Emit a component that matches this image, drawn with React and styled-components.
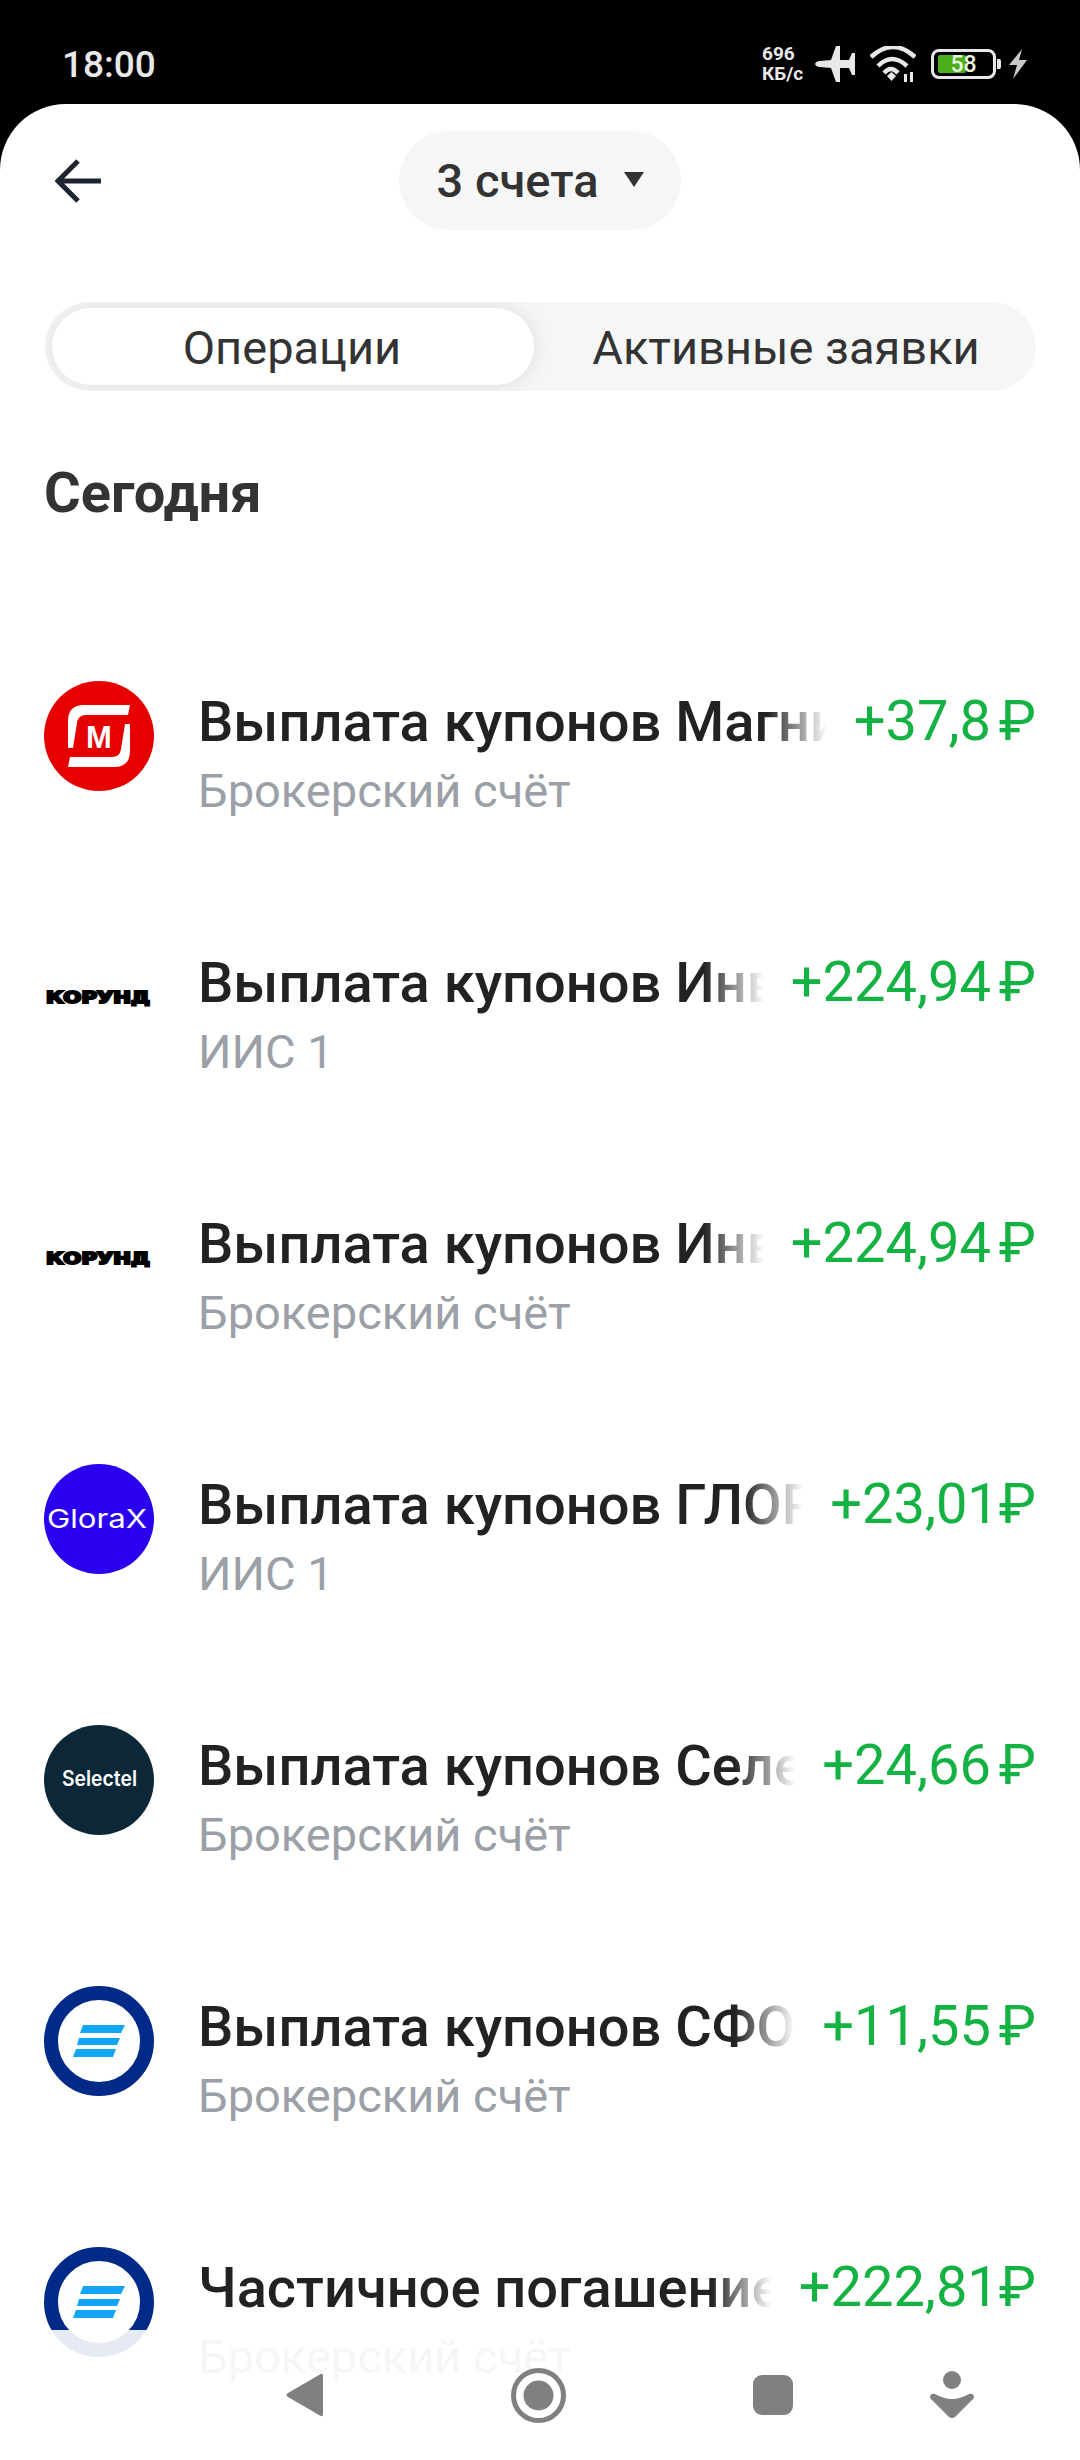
import styled, { createGlobalStyle } from "styled-components";

const GlobalStyle = createGlobalStyle`
    html, body {
        margin: 0;
        padding: 0;
        background: #000;
        font-family: Roboto, "Noto Sans", sans-serif;
    }
`;

const Screen = styled.div`
    position: relative;
    width: 1080px;
    height: 2460px;
    overflow: hidden;
    background: #000;
    display: flex;
    flex-direction: column;
`;

/* status bar */
const StatusBar = styled.div`
    height: 104px;
    flex: none;
    box-sizing: border-box;
    padding: 0 53px 0 62px;
    display: flex;
    align-items: center;
    color: #e8e8e8;
`;

const Clock = styled.div`
    font-size: 37px;
    font-weight: 500;
    line-height: 40px;
    margin-top: 26px;
    flex: 1;
`;

const StatusIcons = styled.div`
    display: flex;
    align-items: center;
    margin-top: 24px;
`;

const NetSpeed = styled.div`
    font-size: 19px;
    font-weight: 700;
    line-height: 20px;
    width: 53px;
`;

const StatusIcon = styled.svg`
    display: block;
    flex: none;
    margin-right: ${(p) => p.$gap || 0}px;
`;

const Battery = styled.div`
    position: relative;
    box-sizing: border-box;
    width: 65px;
    height: 30px;
    border: 3px solid #e8e8e8;
    border-radius: 8px;
    margin-right: 1px;
    display: flex;
    align-items: center;
    justify-content: center;
    font-size: 23px;
    font-weight: 500;
    color: #e8f5dc;
    &::before {
        content: "";
        position: absolute;
        left: 4px;
        top: 3px;
        bottom: 3px;
        width: 28px;
        background: #4caf1a;
        border-radius: 2px;
    }
    span {
        position: relative;
    }
`;

const BatteryNub = styled.div`
    width: 4px;
    height: 10px;
    background: #e8e8e8;
    border-radius: 0 2px 2px 0;
    margin-right: 8px;
`;

/* white sheet */
const Sheet = styled.div`
    flex: 1;
    background: #fff;
    border-radius: 66px 66px 0 0;
    min-height: 0;
    overflow: hidden;
`;

const Header = styled.div`
    height: 99px;
    margin-top: 27px;
    position: relative;
    display: flex;
    justify-content: center;
`;

const BackButton = styled.svg`
    position: absolute;
    left: 55px;
    top: 28px;
`;

const AccountPill = styled.div`
    width: 282px;
    box-sizing: border-box;
    background: #f5f7f6;
    border-radius: 50px;
    display: flex;
    align-items: center;
    justify-content: center;
    gap: 25px;
    font-size: 47px;
    font-weight: 500;
    color: #333;
`;

const Caret = styled.div`
    width: 0;
    height: 0;
    border-left: 10.5px solid transparent;
    border-right: 10.5px solid transparent;
    border-top: 15px solid #333;
    margin-top: -2px;
`;

const Tabs = styled.div`
    height: 89px;
    margin: 72px 44px 0 45px;
    background: #f5f7f6;
    border-radius: 45px;
    overflow: hidden;
    display: flex;
    align-items: stretch;
    padding: 6px 0 6px 7px;
    box-sizing: border-box;
`;

const Tab = styled.div`
    width: ${(p) => (p.$active ? "482px" : "auto")};
    flex: ${(p) => (p.$active ? "none" : "1")};
    display: flex;
    align-items: center;
    justify-content: center;
    font-size: 47px;
    padding: ${(p) => (p.$active ? "2px 2px 0 0" : "2px 0 0 2px")};
    box-sizing: border-box;
    color: #333;
    border-radius: 40px;
    background: ${(p) => (p.$active ? "#fff" : "transparent")};
    box-shadow: ${(p) => (p.$active ? "0 0 22px rgba(0, 0, 0, 0.1)" : "none")};
`;

const DayTitle = styled.div`
    font-size: 56px;
    font-weight: 700;
    line-height: 64px;
    color: #333;
    margin: 70px 44px 0;
`;

const List = styled.div`
    margin-top: 156px;
`;

const Row = styled.div`
    height: 261px;
    box-sizing: border-box;
    padding: 0 44px;
    display: flex;
    align-items: flex-start;
`;

const Logo = styled.svg`
    display: block;
    flex: none;
    width: 110px;
    height: 110px;
    margin-right: 44px;
`;

const RowText = styled.div`
    flex: 1;
    min-width: 0;
    margin-top: 9px;
`;

const RowTitle = styled.div`
    font-size: 56px;
    font-weight: 500;
    line-height: 64px;
    color: #222;
    white-space: nowrap;
    overflow: hidden;
    -webkit-mask-image: linear-gradient(to left, transparent 0, #000 60px);
    mask-image: linear-gradient(to left, transparent 0, #000 60px);
`;

const RowSubtitle = styled.div`
    font-size: 47px;
    line-height: 52px;
    margin-top: 11px;
    color: #9ba0a6;
`;

const Amount = styled.div`
    flex: none;
    margin: 8px 0 0 27px;
    font-size: 56px;
    word-spacing: -6px;
    line-height: 64px;
    color: #14b143;
    white-space: nowrap;
`;

/* translucent navigation bar over the list */
const NavBar = styled.div`
    position: absolute;
    left: 0;
    right: 0;
    bottom: 0;
    height: 130px;
    box-sizing: border-box;
    background: rgba(255, 255, 255, 0.9);
    padding: 38px 0 0 286px;
    display: flex;
    align-items: flex-start;
    gap: 187px;
`;

const NavIcon = styled.svg`
    display: block;
    flex: none;
    margin-left: ${(p) => p.$shift || 0}px;
    margin-top: ${(p) => p.$top || 0}px;
`;

const MagnitLogo = () => (
    <Logo viewBox="0 0 110 110">
        <circle cx="55" cy="55" r="55" fill="#e60000" />
        <path
            d="M86 24 L84 34 H42 Q34 34 33 42 L29 67 H24 V40 Q24 24 40 24 Z"
            fill="#fff"
        />
        <path
            d="M24 86 L26 76 H68 Q76 76 77 68 L81 43 H86 V70 Q86 86 70 86 Z"
            fill="#fff"
        />
        <text
            x="55"
            y="67"
            textAnchor="middle"
            fontFamily="Liberation Sans, sans-serif"
            fontWeight="700"
            fontSize="31"
            fill="#fff"
        >
            М
        </text>
    </Logo>
);

const KorundLogo = () => (
    <Logo viewBox="0 0 110 110">
        <text
            x="2"
            y="60.5"
            textLength="104"
            lengthAdjust="spacingAndGlyphs"
            fontFamily="DejaVu Sans, sans-serif"
            fontWeight="700"
            fontSize="15"
            stroke="#000"
            strokeWidth="2"
            fill="#000"
        >
            КОРУНД
        </text>
    </Logo>
);

const GloraxLogo = () => (
    <Logo viewBox="0 0 110 110">
        <circle cx="55" cy="55" r="55" fill="#2a00ee" />
        <text
            x="3"
            y="64"
            textLength="100"
            lengthAdjust="spacingAndGlyphs"
            fontFamily="Inter, sans-serif"
            fontWeight="400"
            fontSize="26"
            fill="#fff"
        >
            GloraX
        </text>
    </Logo>
);

const SelectelLogo = () => (
    <Logo viewBox="0 0 110 110">
        <circle cx="55" cy="55" r="55" fill="#0b2738" />
        <text
            x="18"
            y="61"
            textLength="75"
            lengthAdjust="spacingAndGlyphs"
            fontFamily="Inter, sans-serif"
            fontWeight="600"
            fontSize="21"
            fill="#fff"
        >
            Selectel
        </text>
    </Logo>
);

const SfoLogo = () => (
    <Logo viewBox="0 0 110 110">
        <circle cx="55" cy="55" r="48" fill="#fff" stroke="#002a87" strokeWidth="14" />
        <polygon points="39,39 81,39 77,47 36,47" fill="#12a5f5" />
        <polygon points="35,52 76,52 73,59 33,59" fill="#12a5f5" />
        <polygon points="32,63 72,63 69,71 29,71" fill="#12a5f5" />
    </Logo>
);

const operations = [
    { logo: MagnitLogo, title: "Выплата купонов Магнит", account: "Брокерский счёт", amount: "+37,8 ₽" },
    { logo: KorundLogo, title: "Выплата купонов Инвест", account: "ИИС 1", amount: "+224,94 ₽" },
    { logo: KorundLogo, title: "Выплата купонов Инвест", account: "Брокерский счёт", amount: "+224,94 ₽" },
    { logo: GloraxLogo, title: "Выплата купонов ГЛОРАКС", account: "ИИС 1", amount: "+23,01₽" },
    { logo: SelectelLogo, title: "Выплата купонов Селектел", account: "Брокерский счёт", amount: "+24,66 ₽" },
    { logo: SfoLogo, title: "Выплата купонов СФО Ипотека", account: "Брокерский счёт", amount: "+11,55 ₽" },
    { logo: SfoLogo, title: "Частичное погашение облигаций", account: "Брокерский счёт", amount: "+222,81₽" },
];

function App() {
    return (
        <Screen>
            <GlobalStyle />
            <StatusBar>
                <Clock>18:00</Clock>
                <StatusIcons>
                    <NetSpeed>
                        696
                        <br />
                        КБ/с
                    </NetSpeed>
                    <StatusIcon width="40" height="36" viewBox="0 0 40 36" $gap={15}>
                        <path
                            d="M0 18 Q1 15 5 15 L16 14 L21 0 H25 L25 14 L34 14 L37 7 H40 V29 H37 L34 22 L25 22 L25 36 H21 L16 22 L5 21 Q1 21 0 18 Z"
                            fill="#e8e8e8"
                        />
                    </StatusIcon>
                    <StatusIcon width="46" height="36" viewBox="0 0 46 36" $gap={15}>
                        <g fill="none" stroke="#e8e8e8" strokeWidth="4.5">
                            <path d="M1 11 Q23 -9 45 11" />
                            <path d="M8 20 Q22 6 37 20" />
                            <path d="M14 27 Q21 19 28 27" />
                        </g>
                        <path d="M17 30 L21.5 26 L26 30 L21.5 35 Z" fill="#e8e8e8" />
                        <rect x="34" y="28" width="3" height="8" fill="#e8e8e8" />
                        <rect x="40" y="26" width="3" height="10" fill="#e8e8e8" />
                    </StatusIcon>
                    <Battery>
                        <span>58</span>
                    </Battery>
                    <BatteryNub />
                    <StatusIcon width="18" height="30" viewBox="0 0 18 30">
                        <path d="M13 0 L0 16 H8 L4 30 L18 11 H10 Z" fill="#c8c8c8" />
                    </StatusIcon>
                </StatusIcons>
            </StatusBar>
            <Sheet>
                <Header>
                    <BackButton width="46" height="44" viewBox="0 0 46 44">
                        <path
                            d="M23 2 L3 22 L23 42 M3 22 H46"
                            fill="none"
                            stroke="#1c2430"
                            strokeWidth="5"
                        />
                    </BackButton>
                    <AccountPill>
                        3 счета
                        <Caret />
                    </AccountPill>
                </Header>
                <Tabs>
                    <Tab $active>Операции</Tab>
                    <Tab>Активные заявки</Tab>
                </Tabs>
                <DayTitle>Сегодня</DayTitle>
                <List>
                    {operations.map((item, index) => {
                        const ItemLogo = item.logo;
                        return (
                            <Row key={index}>
                                <ItemLogo />
                                <RowText>
                                    <RowTitle>{item.title}</RowTitle>
                                    <RowSubtitle>{item.account}</RowSubtitle>
                                </RowText>
                                <Amount>{item.amount}</Amount>
                            </Row>
                        );
                    })}
                </List>
            </Sheet>
            <NavBar>
                <NavIcon width="38" height="44" viewBox="0 0 38 44" $top={5}>
                    <path
                        d="M37 3 Q37 -1 33 2 L2 20 Q-1 22 2 24 L33 42 Q37 45 37 41 Z"
                        fill="#808080"
                    />
                </NavIcon>
                <NavIcon width="55" height="55" viewBox="0 0 55 55">
                    <circle cx="27.5" cy="27.5" r="25" fill="none" stroke="#808080" strokeWidth="5" />
                    <circle cx="27.5" cy="27.5" r="15" fill="#808080" />
                </NavIcon>
                <NavIcon width="40" height="40" viewBox="0 0 40 40" $top={7}>
                    <rect width="40" height="40" rx="9" fill="#808080" />
                </NavIcon>
                <NavIcon width="44" height="48" viewBox="0 0 44 48" $shift={-50} $top={3}>
                    <circle cx="22" cy="9" r="9" fill="#808080" />
                    <path
                        d="M0 27 Q0 22 5 23 Q14 28 22 28 Q30 28 39 23 Q44 22 44 27 L25 46 Q22 48 19 46 Z"
                        fill="#808080"
                    />
                </NavIcon>
            </NavBar>
        </Screen>
    );
}

export default App;
